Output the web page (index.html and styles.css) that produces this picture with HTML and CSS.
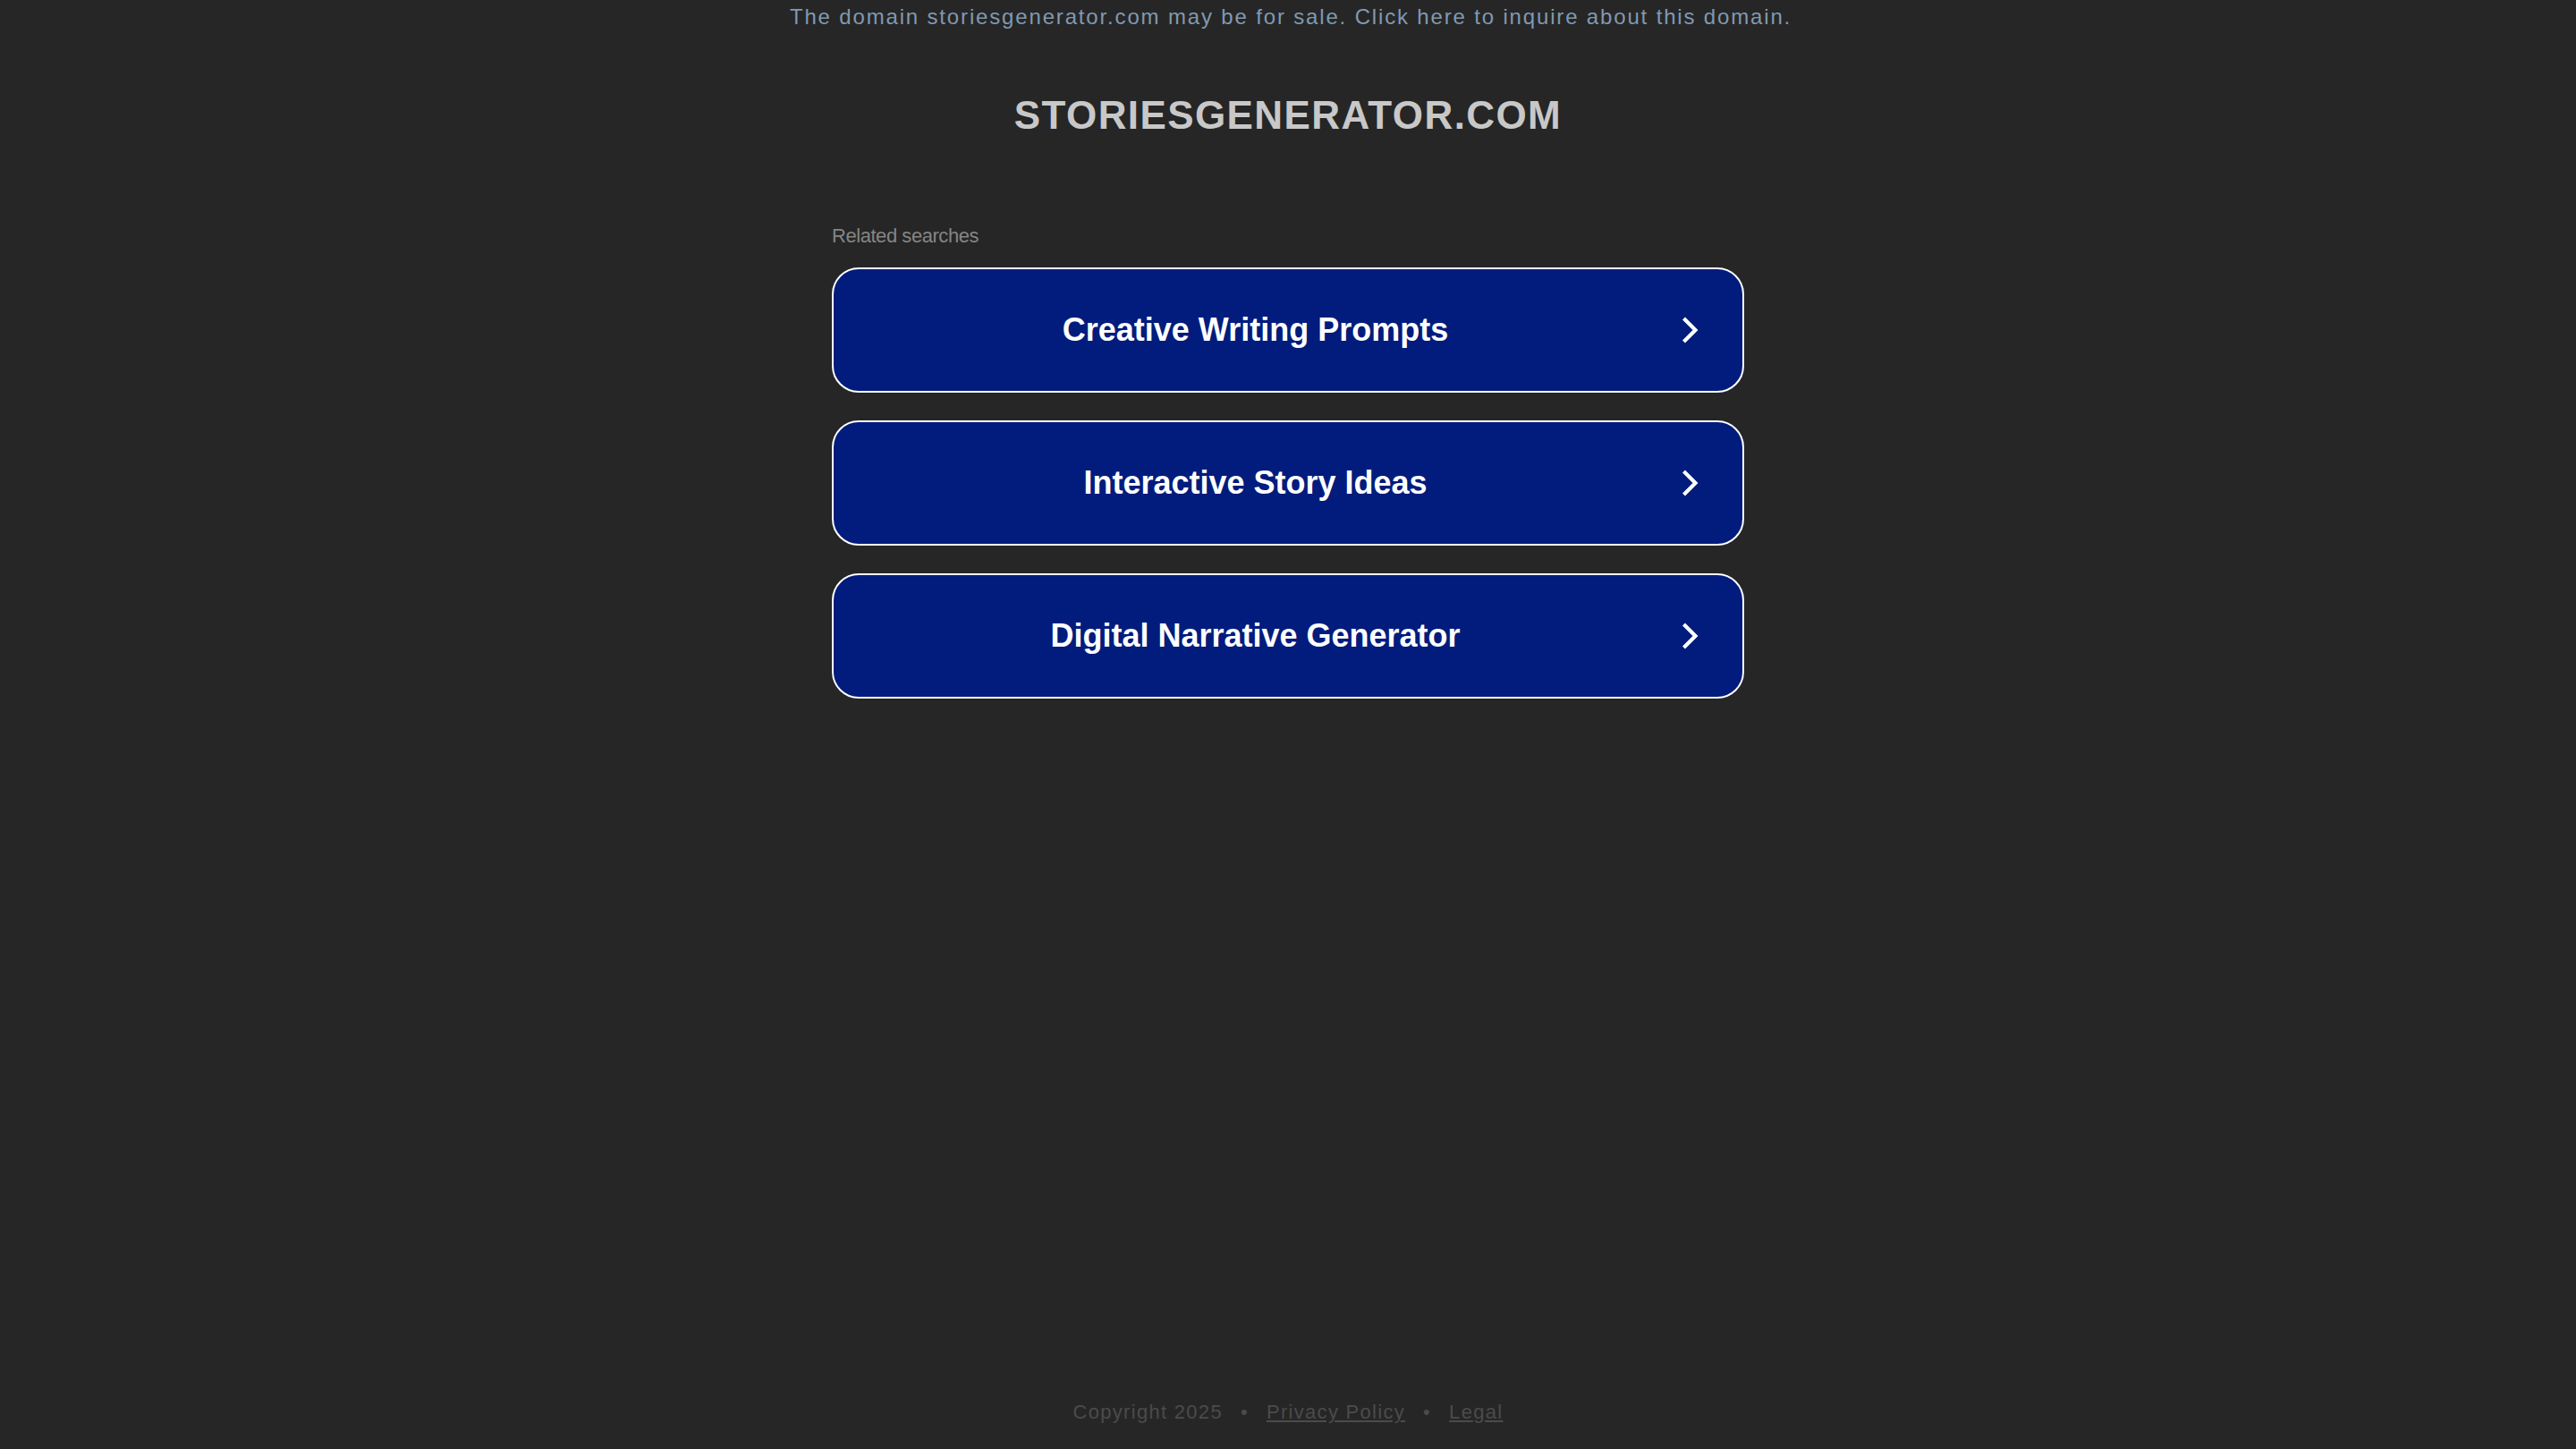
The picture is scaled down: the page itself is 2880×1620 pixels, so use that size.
FILE: index.html
```html
<!DOCTYPE html>
<html lang="en">
<head>
<meta charset="utf-8">
<title>storiesgenerator.com</title>
<link rel="stylesheet" href="styles.css">
</head>
<body>
<div class="page">
  <header class="announce">
    <a class="announce-link" href="#">The domain storiesgenerator.com may be for sale. Click here to inquire about this domain.</a>
  </header>
  <main class="content">
    <h1 class="domain">storiesgenerator.com</h1>
    <section class="related">
      <p class="related-label">Related searches</p>
      <div class="related-list">
        <a class="search-btn" href="#">
          <span class="search-text">Creative Writing Prompts</span>
          <svg class="chevron" viewBox="0 0 20 32" width="20" height="32" aria-hidden="true"><path d="M3.5 3 L16.5 16 L3.5 29" fill="none" stroke="#fff" stroke-width="4.2"/></svg>
        </a>
        <a class="search-btn" href="#">
          <span class="search-text">Interactive Story Ideas</span>
          <svg class="chevron" viewBox="0 0 20 32" width="20" height="32" aria-hidden="true"><path d="M3.5 3 L16.5 16 L3.5 29" fill="none" stroke="#fff" stroke-width="4.2"/></svg>
        </a>
        <a class="search-btn" href="#">
          <span class="search-text">Digital Narrative Generator</span>
          <svg class="chevron" viewBox="0 0 20 32" width="20" height="32" aria-hidden="true"><path d="M3.5 3 L16.5 16 L3.5 29" fill="none" stroke="#fff" stroke-width="4.2"/></svg>
        </a>
      </div>
    </section>
  </main>
  <footer class="footer">
    <span class="footer-item">Copyright 2025</span>
    <span class="footer-sep">•</span>
    <a class="footer-link" href="#">Privacy Policy</a>
    <span class="footer-sep">•</span>
    <a class="footer-link" href="#">Legal</a>
  </footer>
</div>
</body>
</html>
```

FILE: styles.css
```css
html, body {
  margin: 0;
  padding: 0;
  background: #262626;
}

body {
  font-family: "Liberation Sans", Arial, Helvetica, sans-serif;
}

.page {
  min-height: 100vh;
  display: flex;
  flex-direction: column;
  align-items: center;
  box-sizing: border-box;
}

.announce {
  padding-top: 5px;
  padding-left: 6px;
  text-align: center;
}

.announce-link {
  font-size: 24px;
  line-height: 28px;
  letter-spacing: 1.84px;
  color: #8199b1;
  text-decoration: none;
}

.content {
  display: flex;
  flex-direction: column;
  align-items: center;
  width: 1020px;
}

.domain {
  margin: 71px 0 0;
  font-size: 44px;
  line-height: 50px;
  font-weight: 700;
  letter-spacing: 1.4px;
  text-transform: uppercase;
  color: #c8c8c8;
}

.related {
  width: 100%;
  margin-top: 97px;
}

.related-label {
  margin: 0 0 22px;
  font-size: 22px;
  line-height: 26px;
  letter-spacing: -0.45px;
  color: #858585;
}

.related-list {
  display: flex;
  flex-direction: column;
  gap: 31px;
}

.search-btn {
  display: flex;
  align-items: center;
  height: 140px;
  box-sizing: border-box;
  border: 2px solid #ffffff;
  border-radius: 30px;
  background: #011c7c;
  padding: 0 49px 0 3px;
  text-decoration: none;
  color: #ffffff;
}

.search-text {
  flex: 1;
  text-align: center;
  font-size: 36px;
  font-weight: 700;
  line-height: 42px;
}

.chevron {
  flex: none;
  margin-left: 7px;
  display: block;
}

.footer {
  margin-top: auto;
  padding-bottom: 28px;
  display: flex;
  align-items: center;
  font-size: 22px;
  line-height: 26px;
  letter-spacing: 1.3px;
  color: #4b4b4b;
}

.footer-sep {
  margin: 0 20px;
}

.footer-link {
  color: #4b4b4b;
  text-decoration: underline;
}
```
